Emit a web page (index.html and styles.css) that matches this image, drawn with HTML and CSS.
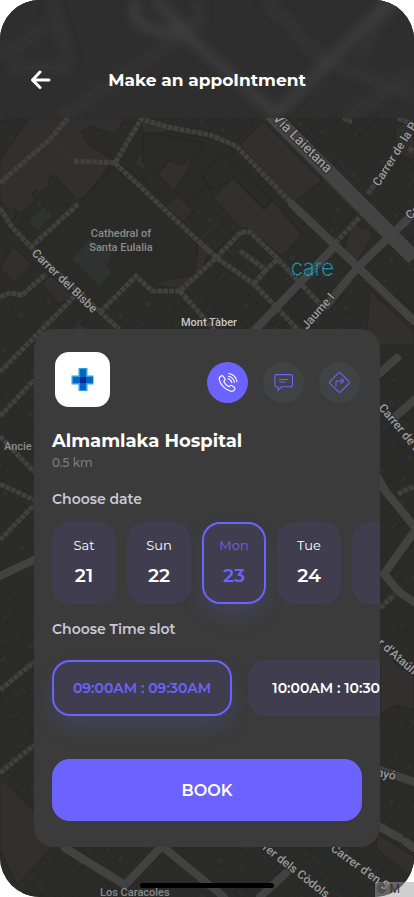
FILE: index.html
```html
<!DOCTYPE html>
<html lang="en">
<head>
<meta charset="utf-8">
<meta name="viewport" content="width=device-width, initial-scale=1">
<title>Make an appointment</title>
<link rel="stylesheet" href="styles.css">
</head>
<body>
<div class="screen">
  <svg class="map" viewBox="0 0 414 897" preserveAspectRatio="xMidYMid slice" aria-hidden="true">
    <defs>
      <pattern id="lots" width="74" height="66" patternUnits="userSpaceOnUse" patternTransform="rotate(43)">
        <path class="lot-line" d="M0 8H20V0M20 8V30H0M20 20H48V0M48 12H74M34 20V46H8V66M34 38H60V12M60 30H74M60 38V66M34 46V66M0 52H8M46 38V52H60"/>
        <path class="lot-fill" d="M5 14h6v8h-6zM40 25h9v5h-9zM53 44h4v12h-4zM16 52h7v7h-7zM64 17h6v5h-6zM27 5h5v7h-5z"/>
      </pattern>
    </defs>
    <rect class="ground" width="414" height="897"/>
    <rect width="414" height="897" fill="url(#lots)"/>
    <!-- large buildings -->
    <path class="block" d="M115 165L210 252 196 266 193 276 180 289H152L136 272 100 308 32 245 78 204zM236 150L290 204 262 228 214 198 200 172zM142 120L210 136 236 150 214 180 178 210 116 160z"/>
    <!-- open squares -->
    <g class="plaza">
      <path d="M30 118H125L115 134 98 129 94 125 81 132 90 146 113 160 88 193 78 201 56 176 53 175 48 180 50 186 40 193 35 190 32 194 36 200 20 213 12 207 16 219 0 200V160z"/>
      <path d="M239 145L264 122 322 181 292 203z"/>
      <path d="M214 198L232 178 264 210 272 200 302 235 282 256 249 229 240 227z"/>
      <path d="M141 120L180 129 210 138 178 132 168 131 155 134 143 132z"/>
      <path d="M165 150L180 165 192 157 186 173 174 190 158 174zM177 196L193 210 184 222 166 207z"/>
      <path d="M140 154L149 160 143 170 134 164zM13 246L31 264 14 282 0 268zM51 276L75 296 60 304 42 284z"/>
      <path d="M199 240L210 250 202 268 180 289 152 285 165 280 194 275zM352 223L374 233 357 262 344 250z"/>
      <path d="M370 290L414 332V345H366zM395 130L414 115V160L397 153z"/>
      <path d="M380 640L400 670 414 665V710L396 705 380 714zM0 778L34 812 53 847 17 885 0 850zM378 835L414 856V880L376 848z"/>
    </g>
    <path class="park" d="M43 207L52 215 38 230 29 222zM89 240L112 253 107 266 112 273 99 286 72 259zM80 324L90 332H70z"/>
    <path class="block" d="M220 150L271 199 264 209 234 178 212 190 204 178zM143 134L154 137 156 133 203 143 201 151 181 165 169 161 157 176 143 163z"/>
    <!-- pedestrian streets -->
    <g class="walk">
      <path d="M0 183L50 139 68 118M74 161L115 163 141 119 168 127 210 135 236 146 292 204M115 163L210 252"/>
      <path d="M78 204L31 247M0 208L12 227 31 247 100 312 119 329M100 312L136 276 152 291H180L217 257 241 232H250L276 257 320 304"/>
      <path d="M180 291L218 334M0 297L10 293 22 295 46 274M75 296L0 372M204 246L217 258 254 284 300 332M240 251L266 270 278 259M254 284L266 270M335 243L360 217"/>
      <path d="M343 118L352 122M368 194L376 182M398 494L414 486M380 608L394 595M0 416L34 380M0 436L34 472M0 484L34 500M0 540L34 505M0 690L34 662M0 773L34 745M398 118L414 125M409 148L414 152"/>
    </g>
    <path class="trail" d="M52 140L70 160M200 240L226 212M262 118L390 245 414 270M294 118L400 220 414 230M370 235L352 247 358 256"/>
    <!-- carriageways -->
    <g class="road">
      <path d="M292 204L414 321M254 331L335 246M326 306L357 268 414 213"/>
      <path d="M380 373L397 358M394 418L414 400M378 478L386 492 414 526M414 532L384 574 399 592 414 602"/>
      <path d="M0 576L34 560M65 848L125 885 162 846 224 897M260 897L286 873M380 770L414 782M378 826L400 838M406 842L414 848"/>
    </g>
    <path class="avenue" d="M266 109L414 258"/>
    <!-- street and place names -->
    <g class="names">
      <text x="121" y="237" text-anchor="middle">Cathedral of</text>
      <text x="121" y="251" text-anchor="middle">Santa Eulalia</text>
      <text x="100" y="896">Los Caracoles</text>
      <text x="4" y="450">Ancie</text>
    </g>
    <g class="names streets">
      <text transform="translate(31 254) rotate(44)">Carrer del Bisbe</text>
      <text class="wide-name" transform="translate(272 119) rotate(45)">Via Laietana</text>
      <text transform="translate(379 187) rotate(-58)">Carrer de la P</text>
      <text transform="translate(410 220) rotate(-42)">Ca</text>
      <text transform="translate(307 330) rotate(-49)">Jaume I</text>
      <text transform="translate(378 408) rotate(50)">Carrer de L</text>
      <text transform="translate(377 644) rotate(41)">r d’Ataúlf</text>
      <text transform="translate(376 776) rotate(12)">nyó</text>
      <text transform="translate(262 849) rotate(38)">rer dels Còdols</text>
      <text transform="translate(330 850) rotate(36)">Carrer d’en S</text>
    </g>
    <text class="place" x="209" y="326" text-anchor="middle">Mont Tàber</text>
    <text class="care" x="291" y="275">care</text>
  </svg>

  <header class="topbar">
    <svg class="haze" viewBox="0 0 414 118" preserveAspectRatio="xMidYMid slice" aria-hidden="true">
      <defs><filter id="soft" x="-10%" y="-30%" width="120%" height="160%"><feGaussianBlur stdDeviation="5"/></filter></defs>
      <g filter="url(#soft)">
        <path d="M0 58L48 26M50 0L70 60M10 67H70M198 0V25L60 118M265 0L325 62 414 95M360 60L374 28 400 0M345 118L380 96 414 70"/>
        <path class="haze-main" d="M135 0V18Q150 36 180 30L276 114 330 60 390 0M155 0L190 35"/>
      </g>
    </svg>
    <button class="back" type="button" aria-label="Back">
      <svg width="22" height="20" viewBox="0 0 22 20" aria-hidden="true"><path d="M10 2L2.500 10 10 17.500M3 10H19"/></svg>
    </button>
    <h1>Make an appoIntment</h1>
  </header>

  <main class="card">
    <div class="summary">
      <svg class="logo" viewBox="0 0 55 55" role="img" aria-label="Almamlaka Hospital">
        <rect width="55" height="55" rx="14" fill="#fff"/>
        <path d="M23.500 16h9v7.500H38.500v9h-6V39h-9v-6.500H16.500v-9h7z" fill="#29a5e0"/>
        <path d="M25 17h6v8h7v6h-7v7h-6v-7h-7v-6h7z" fill="#0864c2"/>
        <path d="M25 25h6v6h-6z" fill="#062a96"/>
      </svg>
      <div class="actions">
        <button class="round call" type="button" aria-label="Call">
          <svg viewBox="0 0 24 24" aria-hidden="true"><path d="M5.200 4.300C3.500 5 2.200 6.700 2.600 8.700 3.900 14.800 9.700 20.500 15.700 22c2 .5 3.900-.8 4.600-2.300.4-.9.100-1.700-.6-2.200l-2.700-1.900c-.7-.5-1.600-.4-2.200.2l-1.100 1.100c-2.300-1.100-5-3.800-6-6.100l1.100-1.100c.6-.6.700-1.400.2-2.100L6.900 4.800c-.4-.6-1-.8-1.700-.5zM12.500 7.800c2.400.5 3.900 2 4.400 4.300M13 4.800c3.700.7 6.200 3.300 6.900 7M13.500 1.800c4.800.8 8.500 4.500 9.300 9.300"/></svg>
        </button>
        <button class="round" type="button" aria-label="Message">
          <svg viewBox="0 0 24 24" aria-hidden="true"><path d="M4 3H20.500a1.800 1.800 0 0 1 1.800 1.800V15a1.800 1.800 0 0 1-1.800 1.800H10L5.700 21V16.800H4A1.800 1.800 0 0 1 2.200 15V4.800A1.800 1.800 0 0 1 4 3zM7.500 8.500H17M7.500 11.500H14.500"/></svg>
        </button>
        <button class="round" type="button" aria-label="Directions">
          <svg viewBox="0 0 24 24" aria-hidden="true"><path d="M10.800 1.300a1.700 1.700 0 0 1 2.400 0l9.500 9.500a1.700 1.700 0 0 1 0 2.400l-9.500 9.500a1.700 1.700 0 0 1-2.400 0l-9.500-9.500a1.700 1.700 0 0 1 0-2.400zM8 16V10.200H16.500M13.800 7.200L16.800 10.200 13.800 13.200"/></svg>
        </button>
      </div>
    </div>
    <h2 class="name">Almamlaka Hospital</h2>
    <p class="distance">0.5 km</p>

    <h3 class="label">Choose date</h3>
    <div class="dates">
      <button class="tile date" type="button"><span>Sat</span><b>21</b></button>
      <button class="tile date" type="button"><span>Sun</span><b>22</b></button>
      <button class="tile date selected" type="button" aria-pressed="true"><span>Mon</span><b>23</b></button>
      <button class="tile date" type="button"><span>Tue</span><b>24</b></button>
      <button class="tile date" type="button" aria-label="Next day"></button>
    </div>

    <h3 class="label time-label">Choose Time slot</h3>
    <div class="slots">
      <button class="tile slot selected" type="button" aria-pressed="true">09:00AM : 09:30AM</button>
      <button class="tile slot" type="button">10:00AM : 10:30AM</button>
    </div>

    <button class="book" type="button">BOOK</button>
  </main>
  <div class="home-bar"></div>
</div>
<small class="credit">© M</small>
</body>
</html>
```
FILE: styles.css
```css
* { box-sizing: border-box; }
body {
  position: relative;
  margin: 0;
  background: #fff;
  color: #fff;
  font-family: Montserrat, Inter, "Open Sans", sans-serif;
}
h1, h2, h3, p { margin: 0; }
button {
  border: 0;
  padding: 0;
  color: inherit;
  font: inherit;
}
.screen {
  position: relative;
  display: flex;
  flex-direction: column;
  min-height: 100vh;
  overflow: hidden;
  border-radius: 40px;
  background: #2a2a29;
}

/* map */
.map {
  position: absolute;
  inset: 0;
  width: 100%;
  height: 100%;
}
.ground { fill: #2b2b2a; }
.block { fill: #2a2a29; stroke: #252524; }
.plaza { fill: #32302e; stroke: #282726; }
.park { fill: #2f3230; }
.lot-line { fill: none; stroke: #262625; }
.lot-fill { fill: #2f2f2e; stroke: #262625; }
.walk, .road, .avenue, .trail { fill: none; stroke: #424242; }
.walk { stroke-width: 5; stroke-dasharray: 5 1; stroke: #404040; }
.road { stroke-width: 8; stroke-linecap: round; stroke-linejoin: round; }
.avenue { stroke-width: 15; stroke: #434343; }
.trail { stroke-width: 1; stroke-dasharray: 1 2; }
.names {
  fill: #8a8a8a;
  font: 500 11px Roboto, sans-serif;
}
.streets {
  fill: #9a9a9a;
  stroke: #2a2a29;
  stroke-width: 2;
  paint-order: stroke;
  font-size: 12px;
}
.wide-name { font-size: 14px; }
.place {
  fill: #c6c6c6;
  font: 500 11px Roboto, sans-serif;
}
.care {
  fill: none;
  stroke: #12a0b4;
  stroke-width: 1;
  stroke-dasharray: 2 1;
  font: 100 22px Inter, sans-serif;
}

/* header */
.topbar {
  position: relative;
  display: grid;
  grid-template-columns: 52px 1fr 52px;
  align-items: center;
  height: 118px;
  padding-top: 42px;
  background: #2e2e2e;
}
.haze {
  position: absolute;
  inset: 0;
  width: 100%;
  height: 100%;
  fill: none;
  stroke: #363636;
  stroke-width: 9;
}
.haze-main { stroke: #3e3e3e; }
.back {
  position: relative;
  display: flex;
  justify-content: flex-end;
  background: none;
}
.back svg {
  fill: none;
  stroke: #fff;
  stroke-width: 3;
  stroke-linecap: round;
  stroke-linejoin: round;
}
h1 {
  position: relative;
  font-size: 17px;
  font-weight: 700;
  text-align: center;
}

/* appointment card */
.card {
  position: relative;
  display: flex;
  flex-direction: column;
  overflow: hidden;
  margin: auto 34px 50px;
  padding: 23px 18px 26px;
  border-radius: 20px;
  background: #3b3b3b;
}
.summary {
  display: flex;
  align-items: center;
  justify-content: space-between;
  padding: 0 2px 0 3px;
}
.logo { width: 55px; height: 55px; }
.actions { display: flex; gap: 15px; padding-top: 6px; }
.round {
  display: grid;
  place-items: center;
  width: 41px;
  height: 41px;
  border-radius: 50%;
  background: #414244;
  color: #6c63ff;
}
.round svg {
  width: 21px;
  height: 21px;
  fill: none;
  stroke: currentColor;
  stroke-width: 1.25;
  stroke-linecap: round;
  stroke-linejoin: round;
}
.call { background: #6c63ff; color: #fff; }
.name {
  margin-top: 22px;
  font-size: 18px;
  font-weight: 700;
  line-height: 24px;
}
.distance {
  margin-top: 2px;
  color: #7b7b7b;
  font-size: 12px;
  font-weight: 500;
  line-height: 16px;
}
.label {
  margin-top: 18px;
  color: #c9c8d6;
  font-size: 14px;
  font-weight: 600;
  line-height: 20px;
}
.time-label { margin-top: 15px; }
.dates, .slots { display: flex; }
.dates { gap: 11px; margin-top: 13px; }
.slots { gap: 16px; margin-top: 21px; }
.tile {
  flex: none;
  border-radius: 18px;
  background: #403d4e;
}
.date {
  display: flex;
  flex-direction: column;
  align-items: center;
  gap: 10px;
  width: 64px;
  height: 82px;
  padding-top: 14px;
}
.date span { font-size: 13px; line-height: 18px; }
.date b { font-size: 19px; font-weight: 600; line-height: 24px; }
.slot {
  width: 180px;
  height: 56px;
  font-size: 14px;
  font-weight: 600;
}
.selected {
  color: #6c63ff;
  box-shadow: inset 0 0 0 2px #6c63ff, 0 12px 20px #6c63ff26;
}
.book {
  height: 62px;
  margin-top: 43px;
  border-radius: 18px;
  background: #6c63ff;
  font-size: 16px;
  font-weight: 600;
}
.home-bar {
  position: absolute;
  bottom: 9px;
  left: 50%;
  width: 134px;
  height: 5px;
  margin-left: -67px;
  border-radius: 3px;
  background: #000;
}
.credit {
  position: absolute;
  right: 0;
  bottom: 0;
  width: 39px;
  height: 15px;
  padding-left: 2px;
  background: #a0a0a080;
  color: #303030;
  font: 12px/15px Roboto, sans-serif;
}
```
